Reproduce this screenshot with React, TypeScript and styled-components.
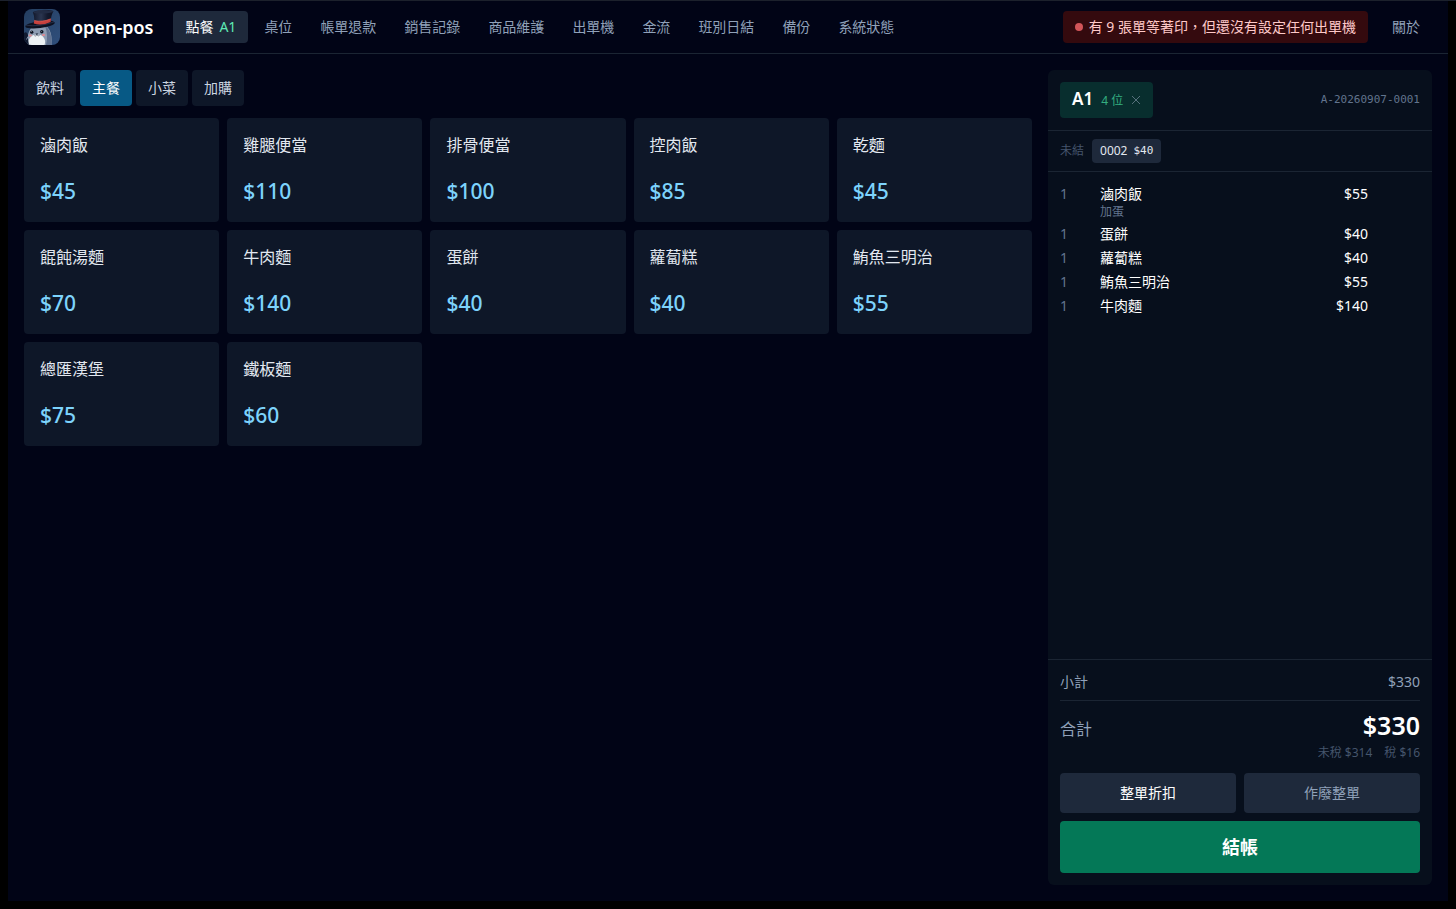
import React, { useState } from 'react';
import styled, { createGlobalStyle } from 'styled-components';

const color = {
  page: '#010416',
  panel: '#070f1c',
  card: '#0e1728',
  raised: '#1e293b',
  line: '#1b2533',
  white: '#ffffff',
  text: '#e2e8f0',
  soft: '#cbd5e1',
  muted: '#90a1b9',
  dim: '#62748e',
  faint: '#45556c',
  sky: '#7dd3fc',
  skyBg: '#075985',
  green: '#047857',
};

const mono = `'DejaVu Sans Mono', 'Liberation Mono', monospace`;

const GlobalStyle = createGlobalStyle`
  *, *::before, *::after { box-sizing: border-box; }
  body {
    margin: 0;
    background: #000;
    color: ${color.text};
    font-family: 'Noto Sans', 'Noto Sans CJK TC', sans-serif;
    font-size: 14px;
    line-height: 20px;
  }
  button {
    margin: 0;
    padding: 0;
    border: 0;
    background: none;
    color: inherit;
    font: inherit;
    cursor: pointer;
  }
  h1, h2, p, ul, dl, dd { margin: 0; padding: 0; }
  ul { list-style: none; }
`;

const Frame = styled.div`
  display: flex;
  min-height: 100vh;
  padding: 0 8px 8px;
  border-top: 1px solid #1c212c;
`;

const Shell = styled.div`
  display: flex;
  flex: 1;
  flex-direction: column;
  min-width: 0;
  background: ${color.page};
`;

const Header = styled.header`
  display: flex;
  align-items: center;
  gap: 12px;
  padding: 8px 16px;
  border-bottom: 1px solid ${color.line};
`;

const LogoImage = styled.svg`
  display: block;
  width: 36px;
  height: 36px;
`;

const Brand = styled.h1`
  color: ${color.white};
  font-size: 18px;
  font-weight: 600;
  line-height: 28px;
`;

const Nav = styled.nav`
  display: flex;
  flex: 1;
  gap: 4px;
  margin-left: 8px;
`;

const NavButton = styled.button<{ $active?: boolean }>`
  padding: 6px 12px;
  border-radius: 4px;
  white-space: nowrap;
  background: ${(p) => (p.$active ? color.raised : 'transparent')};
  color: ${(p) => (p.$active ? color.white : color.muted)};
`;

const NavTag = styled.span`
  margin-left: 6px;
  color: #5ee9b5;
`;

const Alert = styled.button`
  display: flex;
  align-items: center;
  gap: 6px;
  padding: 6px 12px;
  border-radius: 4px;
  background: #340a0e;
  color: #ffc9c9;
  white-space: nowrap;
`;

const Dot = styled.span`
  width: 8px;
  height: 8px;
  border-radius: 50%;
  background: #d15559;
`;

const Main = styled.main`
  display: flex;
  flex: 1;
  gap: 16px;
  padding: 16px;
`;

const Menu = styled.section`
  display: flex;
  flex: 1;
  flex-direction: column;
  gap: 12px;
  min-width: 0;
`;

const Tabs = styled.div`
  display: flex;
  gap: 4px;
`;

const Tab = styled.button<{ $active: boolean }>`
  padding: 8px 12px;
  border-radius: 4px;
  background: ${(p) => (p.$active ? color.skyBg : color.card)};
  color: ${(p) => (p.$active ? color.white : color.soft)};
`;

const Products = styled.div`
  display: grid;
  grid-template-columns: repeat(5, minmax(0, 1fr));
  gap: 8px;
`;

const ProductCard = styled.button`
  display: flex;
  flex-direction: column;
  justify-content: space-between;
  min-height: 104px;
  padding: 16px;
  border-radius: 4px;
  background: ${color.card};
  text-align: left;
`;

const ProductName = styled.span`
  color: ${color.text};
  font-size: 16px;
  line-height: 22px;
`;

const ProductPrice = styled.span`
  color: ${color.sky};
  font-size: 21px;
  font-weight: 500;
  line-height: 30px;
`;

const Order = styled.aside`
  display: flex;
  flex: none;
  flex-direction: column;
  width: 384px;
  border-radius: 6px;
  background: ${color.panel};
`;

const OrderHead = styled.div`
  display: flex;
  align-items: center;
  justify-content: space-between;
  padding: 12px;
  border-bottom: 1px solid ${color.line};
`;

const TableChip = styled.div`
  display: flex;
  align-items: center;
  gap: 8px;
  height: 36px;
  padding: 0 12px;
  border-radius: 4px;
  background: #082e2e;
`;

const TableButton = styled.button`
  display: flex;
  align-items: baseline;
  gap: 8px;
  color: ${color.white};
  font-size: 17px;
  font-weight: 600;
  line-height: 24px;
`;

const Seats = styled.span`
  color: #34ae80;
  font-size: 12px;
  font-weight: 400;
`;

const ClearButton = styled.button`
  display: flex;
  color: #56707c;
`;

const OrderNumber = styled.span`
  color: ${color.dim};
  font-family: ${mono};
  font-size: 11px;
  line-height: 16px;
`;

const OpenBills = styled.div`
  display: flex;
  align-items: center;
  gap: 8px;
  padding: 8px 12px;
  border-bottom: 1px solid ${color.line};
  color: ${color.faint};
  font-size: 12px;
  line-height: 16px;
`;

const BillButton = styled.button`
  display: flex;
  align-items: center;
  gap: 6px;
  padding: 4px 8px;
  border-radius: 4px;
  background: ${color.raised};
  color: ${color.text};
`;

const BillAmount = styled.span`
  font-family: ${mono};
  font-size: 11px;
`;

const Lines = styled.ul`
  display: flex;
  flex: 1;
  flex-direction: column;
  gap: 4px;
  padding: 12px;
`;

const Line = styled.li`
  display: grid;
  grid-template-columns: 28px 1fr auto 40px;
  column-gap: 12px;
  align-items: start;
  color: ${color.white};
`;

const Quantity = styled.span`
  color: ${color.dim};
`;

const Option = styled.p`
  color: ${color.dim};
  font-size: 12px;
  line-height: 16px;
`;

const Footer = styled.div`
  display: flex;
  flex-direction: column;
  padding: 12px;
  border-top: 1px solid ${color.line};
`;

const Subtotal = styled.div`
  display: flex;
  justify-content: space-between;
  padding-bottom: 8px;
  border-bottom: 1px solid ${color.line};
  color: ${color.muted};
`;

const Total = styled.div`
  display: flex;
  align-items: baseline;
  justify-content: space-between;
  padding-top: 8px;
  color: ${color.muted};
  font-size: 16px;
  line-height: 32px;
`;

const TotalAmount = styled.strong`
  color: ${color.white};
  font-size: 25px;
  font-weight: 600;
`;

const Taxes = styled.div`
  display: flex;
  justify-content: flex-end;
  gap: 12px;
  margin-bottom: 12px;
  color: ${color.faint};
  font-size: 12px;
  line-height: 16px;
`;

const Actions = styled.div`
  display: grid;
  grid-template-columns: 1fr 1fr;
  gap: 8px;
`;

const Action = styled.button<{ $quiet?: boolean }>`
  padding: 10px 12px;
  border-radius: 4px;
  background: ${color.raised};
  color: ${(p) => (p.$quiet ? color.muted : color.white)};
`;

const Checkout = styled.button`
  grid-column: 1 / -1;
  padding: 12px;
  border-radius: 4px;
  background: ${color.green};
  color: ${color.white};
  font-size: 18px;
  font-weight: 700;
  line-height: 28px;
`;

function Logo() {
  return (
    <LogoImage viewBox="0 0 36 36" role="img" aria-label="open-pos">
      <defs>
        <clipPath id="logo-round">
          <rect width="36" height="36" rx="8" />
        </clipPath>
        <linearGradient id="logo-sky" x1="0" y1="0" x2="1" y2="1">
          <stop offset="0" stopColor="#243e60" />
          <stop offset="1" stopColor="#304f7c" />
        </linearGradient>
        <linearGradient id="logo-hat" x1="0" y1="0" x2="1" y2="0">
          <stop offset="0" stopColor="#11172a" />
          <stop offset="0.4" stopColor="#2b3650" />
          <stop offset="0.7" stopColor="#141a2e" />
          <stop offset="1" stopColor="#0d1222" />
        </linearGradient>
      </defs>
      <g clipPath="url(#logo-round)">
        <rect width="36" height="36" fill="url(#logo-sky)" />
        <path d="M3.5 36 C2.5 26 5 16 15 15 C25 15 28.5 23 27.5 36Z" fill="#8d9cb2" />
        <path d="M21 17 C26 20 28 27 27.5 36 L22 36 C23.5 30 23.5 23 21 17Z" fill="#5f7190" />
        <path d="M4.5 36 C3.5 30 8 25 12.5 26 C18 24.5 23 30 20.5 36Z" fill="#edf1f4" />
        <circle cx="7.8" cy="23.2" r="1.6" fill="#0c1322" />
        <circle cx="17.8" cy="22.8" r="1.7" fill="#0c1322" />
        <circle cx="7.4" cy="22.7" r="0.4" fill="#fff" />
        <circle cx="17.3" cy="22.3" r="0.4" fill="#fff" />
        <ellipse cx="6.3" cy="26.4" rx="1.7" ry="1" fill="#e18a92" />
        <ellipse cx="19.6" cy="26" rx="1.8" ry="1" fill="#e18a92" />
        <path d="M11.5 24.6h2.8l-1.4 1.3z" fill="#141c2d" />
        <path d="M12.9 25.9q-1.3 1.7-2.5.7M12.9 25.9q1.4 1.6 2.7.5" fill="none" stroke="#344057" strokeWidth="0.6" />
        <path d="M0 24 Q3 22 4 26 Q3.5 31 5 36 L0 36Z" fill="#111b31" />
        <path d="M2.5 30.5l1.5-3" stroke="#8d9cb2" strokeWidth="0.9" />
        <ellipse cx="16" cy="15.6" rx="14.8" ry="3.5" fill="#0c1121" transform="rotate(-7 16 15.6)" />
        <path d="M2 16.2 Q14 18.2 30 13" fill="none" stroke="#34425f" strokeWidth="0.6" />
        <path d="M8.8 3 Q18 -1 29.5 2 Q27 6 26.8 13 Q17 17 10 14.5 Q10.9 8 8.8 3Z" fill="url(#logo-hat)" />
        <ellipse cx="19.2" cy="2.9" rx="10" ry="1.6" fill="#222c44" transform="rotate(-3 19.2 2.9)" />
        <path d="M10.2 11.4 Q18 13.6 26.9 9.8 L26.6 13 Q17.5 17 9.8 14.6Z" fill="#c8413e" />
        <path d="M10.2 11.4 Q18 13.6 26.9 9.8" fill="none" stroke="#e7665a" strokeWidth="0.6" />
      </g>
    </LogoImage>
  );
}

const navItems = ['桌位', '帳單退款', '銷售記錄', '商品維護', '出單機', '金流', '班別日結', '備份', '系統狀態'];

const categories = ['飲料', '主餐', '小菜', '加購'];

const products = [
  { name: '滷肉飯', price: 45 },
  { name: '雞腿便當', price: 110 },
  { name: '排骨便當', price: 100 },
  { name: '控肉飯', price: 85 },
  { name: '乾麵', price: 45 },
  { name: '餛飩湯麵', price: 70 },
  { name: '牛肉麵', price: 140 },
  { name: '蛋餅', price: 40 },
  { name: '蘿蔔糕', price: 40 },
  { name: '鮪魚三明治', price: 55 },
  { name: '總匯漢堡', price: 75 },
  { name: '鐵板麵', price: 60 },
];

const orderLines = [
  { quantity: 1, name: '滷肉飯', option: '加蛋', price: 55 },
  { quantity: 1, name: '蛋餅', price: 40 },
  { quantity: 1, name: '蘿蔔糕', price: 40 },
  { quantity: 1, name: '鮪魚三明治', price: 55 },
  { quantity: 1, name: '牛肉麵', price: 140 },
];

export default function App() {
  const [category, setCategory] = useState('主餐');

  return (
    <>
      <GlobalStyle />
      <Frame lang="zh-TW">
        <Shell>
          <Header>
            <Logo />
            <Brand>open-pos</Brand>
            <Nav>
              <NavButton $active>
                點餐<NavTag>A1</NavTag>
              </NavButton>
              {navItems.map((item) => (
                <NavButton key={item}>{item}</NavButton>
              ))}
            </Nav>
            <Alert>
              <Dot />
              有 9 張單等著印，但還沒有設定任何出單機
            </Alert>
            <NavButton>關於</NavButton>
          </Header>
          <Main>
            <Menu>
              <Tabs role="tablist">
                {categories.map((item) => (
                  <Tab
                    key={item}
                    role="tab"
                    aria-selected={item === category}
                    $active={item === category}
                    onClick={() => setCategory(item)}
                  >
                    {item}
                  </Tab>
                ))}
              </Tabs>
              <Products>
                {products.map((product) => (
                  <ProductCard key={product.name}>
                    <ProductName>{product.name}</ProductName>
                    <ProductPrice>{`$${product.price}`}</ProductPrice>
                  </ProductCard>
                ))}
              </Products>
            </Menu>
            <Order>
              <OrderHead>
                <TableChip>
                  <TableButton>
                    A1<Seats>4 位</Seats>
                  </TableButton>
                  <ClearButton aria-label="取消桌位">
                    <svg width="10" height="10" viewBox="0 0 10 10" fill="none" stroke="currentColor">
                      <path d="M1 1l8 8M9 1L1 9" />
                    </svg>
                  </ClearButton>
                </TableChip>
                <OrderNumber>A-20260907-0001</OrderNumber>
              </OrderHead>
              <OpenBills>
                未結
                <BillButton>
                  0002<BillAmount>$40</BillAmount>
                </BillButton>
              </OpenBills>
              <Lines>
                {orderLines.map((line) => (
                  <Line key={line.name}>
                    <Quantity>{line.quantity}</Quantity>
                    <div>
                      <p>{line.name}</p>
                      {line.option && <Option>{line.option}</Option>}
                    </div>
                    <span>{`$${line.price}`}</span>
                  </Line>
                ))}
              </Lines>
              <Footer>
                <Subtotal>
                  <span>小計</span>
                  <span>$330</span>
                </Subtotal>
                <Total>
                  <span>合計</span>
                  <TotalAmount>$330</TotalAmount>
                </Total>
                <Taxes>
                  <span>未稅 $314</span>
                  <span>稅 $16</span>
                </Taxes>
                <Actions>
                  <Action>整單折扣</Action>
                  <Action $quiet>作廢整單</Action>
                  <Checkout>結帳</Checkout>
                </Actions>
              </Footer>
            </Order>
          </Main>
        </Shell>
      </Frame>
    </>
  );
}
